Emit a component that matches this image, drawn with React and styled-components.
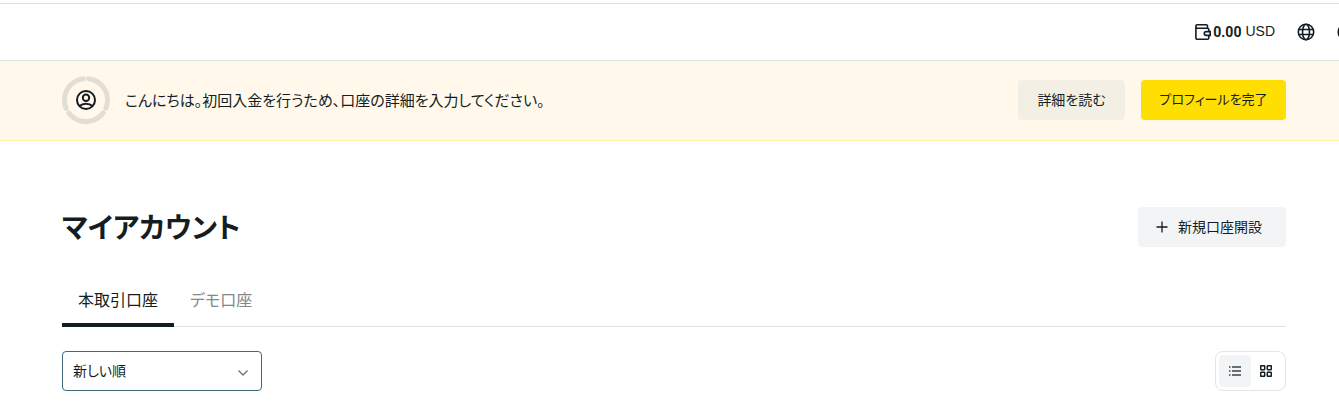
import React, { useState } from 'react';
import styled, { createGlobalStyle } from 'styled-components';

const GlobalStyle = createGlobalStyle`
    * {
        box-sizing: border-box;
    }
    body {
        margin: 0;
        background: #ffffff;
        color: #141d22;
        font-family: "Liberation Sans", "Noto Sans CJK JP", sans-serif;
        font-feature-settings: "palt";
        font-size: 14px;
        line-height: 20px;
    }
    button, select {
        font: inherit;
        font-feature-settings: inherit;
        color: inherit;
    }
    svg {
        display: block;
        flex-shrink: 0;
    }
`;

const Page = styled.div`
    padding-top: 3px;
    overflow: hidden;
`;

const Header = styled.header`
    display: flex;
    justify-content: flex-end;
    align-items: center;
    gap: 22px;
    height: 58px;
    margin-right: -16px;
    border-top: 1px solid #dedfdf;
    border-bottom: 1px solid #dedfdf;
`;

const IconButton = styled.button`
    display: flex;
    padding: 0;
    border: 0;
    background: none;
    cursor: pointer;
`;

const Balance = styled(IconButton)`
    align-items: center;
    gap: 2px;
`;

const Amount = styled.span`
    margin-right: 2px;
    font-family: Roboto, sans-serif;
    font-weight: 700;
`;

const Currency = styled.span`
    padding-bottom: 2px;
`;

const Banner = styled.section`
    display: flex;
    align-items: center;
    gap: 15px;
    height: 80px;
    padding: 0 53px 2px 62px;
    background: #fff8eb;
    border-bottom: 1px solid #fff1a6;
`;

const Message = styled.p`
    flex: 1;
    margin: 0;
    padding-top: 2px;
    font-size: 15px;
    line-height: 24px;
`;

const Button = styled.button`
    display: flex;
    align-items: center;
    justify-content: ${props => props.$icon ? 'flex-start' : 'center'};
    gap: 10px;
    min-width: ${props => props.$width || '107px'};
    height: 40px;
    padding: 0 18px;
    border: 0;
    border-radius: 4px;
    background: ${props => props.$background || '#f3f4f6'};
    font-size: ${props => props.$compact ? '13px' : '14px'};
    white-space: nowrap;
    cursor: pointer;
    & + & {
        margin-left: 1px;
    }
`;

const Main = styled.main`
    padding: 66px 53px 18px 62px;
`;

const TitleRow = styled.div`
    display: flex;
    align-items: center;
    justify-content: space-between;
`;

const Title = styled.h1`
    margin: 0;
    padding-top: 4px;
    font-size: 28px;
    line-height: 36px;
    font-weight: 700;
`;

const Tabs = styled.div`
    display: flex;
    margin-top: 28px;
    border-bottom: 1px solid #dfe1e2;
`;

const Tab = styled.button`
    height: 52px;
    margin-bottom: -1px;
    padding: 3px 16px 0;
    border: 0;
    border-bottom: 4px solid ${props => props.$active ? '#141d22' : 'transparent'};
    background: none;
    color: ${props => props.$active ? '#141d22' : '#84888a'};
    font-size: 16px;
    line-height: 24px;
    cursor: pointer;
`;

const Toolbar = styled.div`
    display: flex;
    align-items: center;
    justify-content: space-between;
    margin-top: 24px;
`;

const SelectBox = styled.label`
    display: grid;
    align-items: center;
    width: 200px;
    > * {
        grid-area: 1 / 1;
    }
    > svg {
        justify-self: end;
        margin-right: 12px;
        pointer-events: none;
    }
`;

const Select = styled.select`
    appearance: none;
    width: 100%;
    height: 40px;
    padding: 0 32px 0 10px;
    border: 1px solid #40667e;
    border-radius: 4px;
    background: #ffffff;
    font-size: 14px;
`;

const ViewSwitch = styled.div`
    display: flex;
    height: 40px;
    padding: 3px 4px 3px 3px;
    border: 1px solid #e3e5e7;
    border-radius: 8px;
`;

const ViewButton = styled(IconButton)`
    align-items: center;
    justify-content: center;
    width: ${props => props.$active ? '32px' : '30px'};
    border-radius: 4px;
    background: ${props => props.$active ? '#f3f4f6' : 'none'};
`;

const WalletIcon = () => (
    <svg width="16" height="18" viewBox="0 0 16 18" fill="none" stroke="#141d22" strokeWidth="1.6" aria-hidden="true">
        <path d="M12.5 5.200V3a1.300 1.300 0 0 0-1.300-1.300H2.200A1.300 1.300 0 0 0 .9 3v12a1.300 1.300 0 0 0 1.300 1.300h10.300a1.300 1.300 0 0 0 1.300-1.300v-2.500M.9 3.500a1.600 1.600 0 0 0 1.600 1.700h10a1.300 1.300 0 0 1 1.300 1.300v2" />
        <path d="M15.200 8.600h-4a1.900 1.900 0 0 0 0 3.800h4z" />
    </svg>
);

const GlobeIcon = () => (
    <svg width="18" height="18" viewBox="0 0 18 18" fill="none" stroke="#141d22" strokeWidth="1.6" aria-hidden="true">
        <circle cx="9" cy="9" r="7.7" />
        <ellipse cx="9" cy="9" rx="3.5" ry="7.7" />
        <path d="M1.8 6.5h14.4M1.8 11.5h14.4" />
    </svg>
);

const UserIcon = () => (
    <svg width="18" height="18" viewBox="0 0 18 18" fill="none" stroke="#141d22" strokeWidth="1.7" aria-hidden="true">
        <circle cx="9" cy="9" r="7.7" />
    </svg>
);

const ProfileProgress = () => (
    <svg width="48" height="48" viewBox="0 0 48 48" fill="none" aria-hidden="true">
        <g stroke="#e2dfd2" strokeWidth="5" strokeLinecap="round">
            {[0, 120, 240].map(angle => (
                <circle
                    key={angle}
                    cx="24"
                    cy="24"
                    r="21.5"
                    strokeDasharray="39.5 200"
                    transform={`rotate(${angle - 83} 24 24)`}
                />
            ))}
        </g>
        <g stroke="#141d22" strokeWidth="2">
            <circle cx="24" cy="24" r="9" />
            <circle cx="24" cy="21.7" r="3.2" />
            <path d="M17.7 30c1.5-1.6 3.7-2.3 6.3-2.3s4.8.7 6.3 2.3" />
        </g>
    </svg>
);

const PlusIcon = () => (
    <svg width="12" height="12" viewBox="0 0 12 12" stroke="#141d22" strokeWidth="1.3" aria-hidden="true">
        <path d="M6 .5v11M.5 6h11" />
    </svg>
);

const ChevronIcon = () => (
    <svg width="14" height="14" viewBox="0 0 14 14" fill="none" stroke="#66737b" strokeWidth="1.3" aria-hidden="true">
        <path d="M2.5 6.5 7 11l4.5-4.5" />
    </svg>
);

const ListIcon = () => (
    <svg width="12" height="12" viewBox="0 0 12 12" stroke="#39434a" strokeWidth="1.4" aria-hidden="true">
        <path d="M0 2h1.5M3 2h9M0 6h1.5M3 6h9M0 10h1.5M3 10h9" />
    </svg>
);

const GridIcon = () => (
    <svg width="12" height="12" viewBox="0 0 12 12" fill="none" stroke="#141d22" strokeWidth="1.5" aria-hidden="true">
        {[[0.7, 0.7], [7.3, 0.7], [0.7, 7.3], [7.3, 7.3]].map(([x, y]) => (
            <rect key={`${x}-${y}`} x={x} y={y} width="4" height="4" rx=".6" />
        ))}
    </svg>
);

const tabs = ['本取引口座', 'デモ口座'];

const App = () => {
    const [activeTab, setActiveTab] = useState(0);
    const [view, setView] = useState('list');

    return (
        <Page>
            <GlobalStyle />
            <Header>
                <Balance>
                    <WalletIcon />
                    <Amount>0.00</Amount>
                    <Currency>USD</Currency>
                </Balance>
                <IconButton aria-label="言語"><GlobeIcon /></IconButton>
                <IconButton aria-label="プロフィール"><UserIcon /></IconButton>
            </Header>
            <Banner>
                <ProfileProgress />
                <Message>こんにちは。初回入金を行うため、口座の詳細を入力してください。</Message>
                <Button $background="#f3efe5">詳細を読む</Button>
                <Button $background="#ffde02" $width="145px" $compact>プロフィールを完了</Button>
            </Banner>
            <Main>
                <TitleRow>
                    <Title>マイアカウント</Title>
                    <Button $width="148px" $icon><PlusIcon />新規口座開設</Button>
                </TitleRow>
                <Tabs role="tablist">
                    {tabs.map((tab, index) => (
                        <Tab
                            key={tab}
                            role="tab"
                            aria-selected={activeTab === index}
                            $active={activeTab === index}
                            onClick={() => setActiveTab(index)}
                        >
                            {tab}
                        </Tab>
                    ))}
                </Tabs>
                <Toolbar>
                    <SelectBox>
                        <Select aria-label="並べ替え">
                            <option>新しい順</option>
                        </Select>
                        <ChevronIcon />
                    </SelectBox>
                    <ViewSwitch>
                        <ViewButton aria-label="リスト表示" $active={view === 'list'} onClick={() => setView('list')}>
                            <ListIcon />
                        </ViewButton>
                        <ViewButton aria-label="グリッド表示" $active={view === 'grid'} onClick={() => setView('grid')}>
                            <GridIcon />
                        </ViewButton>
                    </ViewSwitch>
                </Toolbar>
            </Main>
        </Page>
    );
};

export default App;
